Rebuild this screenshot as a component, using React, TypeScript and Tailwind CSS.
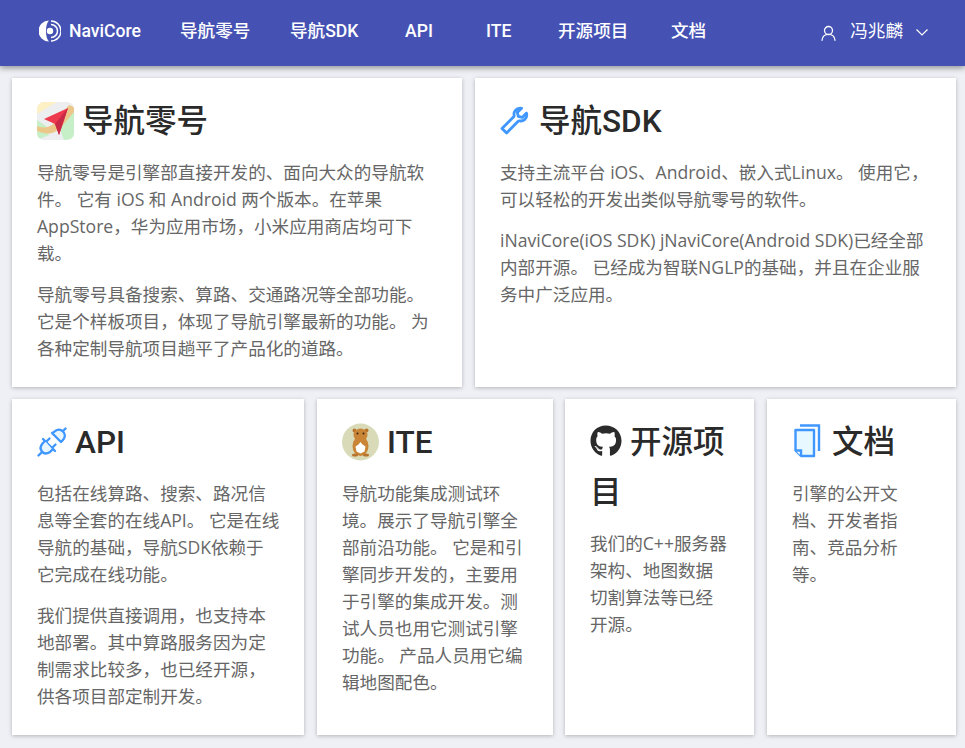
import React from 'react';
import { FaGithub } from 'react-icons/fa';

function ZeroIcon() {
  return (
    <svg width="37" height="38" viewBox="0 0 37 38" className="translate-y-[2px]">
      <defs>
        <clipPath id="zero"><rect width="37" height="38" rx="7" /></clipPath>
      </defs>
      <g clipPath="url(#zero)">
        <rect width="37" height="38" fill="#eceef0" />
        <path d="M0 0h20L0 12z" fill="#fdf0c4" />
        <path d="M0 18l9 6 3 9-12 5z" fill="#c6efc8" />
        <path d="M24 15l13-6v28l-10 1-3-8z" fill="#c6efc8" />
        <path d="M0 24c10 4 17-1 22-8L32 3l5 2v5L26 23c-7 9-15 10-23 7l-3-1z" fill="#ecc78a" />
        <path d="M31 6L7 17l11 5 4 11z" fill="#ee3a4f" />
        <path d="M31 6L18 22l4 11z" fill="#c92a45" />
      </g>
    </svg>
  );
}

function WrenchIcon() {
  return (
    <svg width="31" height="30" viewBox="0 0 31 30" fill="none" stroke="#3f97ff" strokeWidth="2.800" strokeLinejoin="round" className="-translate-y-[2px]">
      <path d="M20 2.200c-3.800 0-6.600 3.400-5.900 7.100.1.600 0 1.100-.4 1.500L2 22.400 6.600 27 18.200 15.300c.4-.4.9-.5 1.500-.4 3.700.7 7.100-2.100 7.100-5.900 0-.7-.1-1.300-.3-1.900l-4.300 4.300-3.900-1-1-3.900 4.300-4.200c-.6-.2-1-.1-1.600-.1z" />
    </svg>
  );
}

function PlugIcon() {
  return (
    <svg width="30" height="30" viewBox="0 0 30 30" fill="none" stroke="#3f97ff" strokeWidth="2.400" strokeLinecap="round" strokeLinejoin="round" className="-translate-y-[2px]">
      <path d="M1.500 28.500l4-4" />
      <path d="M23.500 6.500l5-5" />
      <path d="M15 6l9 9 1.500-1.500c3-3 3-6.500.5-9s-6-2.500-9 .5z" fill="#e8f6ff" />
      <path d="M12.500 11.500l-3 3M18.500 17.500l-3 3" />
      <path d="M6 12l12 12" />
      <path d="M8 14l-2.500 2.500c-2.500 3-2.500 5.500-.5 8s5 2.500 8 .5l2.500-2.500" fill="#e8f6ff" />
    </svg>
  );
}

function HamsterIcon() {
  return (
    <svg width="37" height="38" viewBox="0 0 37 38" className="translate-y-[2px]">
      <circle cx="18.500" cy="19" r="18.500" fill="#d9dbb8" />
      <circle cx="12.500" cy="7.500" r="2" fill="#b8742c" />
      <circle cx="24.500" cy="7.500" r="2" fill="#b8742c" />
      <ellipse cx="18.500" cy="12" rx="7" ry="6.500" fill="#c98436" />
      <ellipse cx="18.500" cy="23" rx="8" ry="10" fill="#c98436" />
      <circle cx="15.500" cy="10.500" r="1" fill="#3a2410" />
      <circle cx="21.500" cy="10.500" r="1" fill="#3a2410" />
      <path d="M18.500 19l2 2.500 3 2-1 5-4 2-4-2-1-5 3-2z" fill="#fff" />
      <ellipse cx="13" cy="32" rx="3" ry="1.500" fill="#b8742c" />
      <ellipse cx="24" cy="32" rx="3" ry="1.500" fill="#b8742c" />
    </svg>
  );
}

function DocIcon() {
  return (
    <svg width="32" height="34" viewBox="0 0 32 34" fill="none" stroke="#3f97ff" strokeWidth="2.400" className="-translate-y-[1px]">
      <path d="M8 1.500h19v25.500" />
      <path d="M3.500 6h18.500v26h-13l-5.500-5.500z" fill="#e8f8ff" strokeLinejoin="round" />
      <path d="M3.500 26.500h5.500v5.500" fill="#fff" />
    </svg>
  );
}

function NaviLogo() {
  return (
    <svg width="22" height="22" viewBox="0 0 22 22" fill="none" stroke="#fff">
      <path d="M10 .5a10.500 10.500 0 0 0 0 21c-2-2-3-5.500-3-10.500s1-8.500 3-10.500z" fill="#fff" stroke="none" />
      <path d="M12 1a10 10 0 0 1 0 20" strokeWidth="1.500" />
      <path d="M12 4.500a6.500 6.500 0 0 1 0 13" strokeWidth="1.500" />
      <circle cx="11" cy="11" r="3.200" fill="#fff" stroke="none" />
    </svg>
  );
}

function UserIcon() {
  return (
    <svg width="15" height="16" viewBox="0 0 15 16" fill="none" stroke="#fff" strokeWidth="1.300" strokeLinecap="round" className="mt-[4px]">
      <circle cx="7.500" cy="5.500" r="4" />
      <path d="M1 15.300c.3-3.500 2.500-6 6.500-6s6.200 2.500 6.500 6" />
    </svg>
  );
}

interface CardProps {
  icon: React.ReactNode;
  title: string;
  paras: string[];
  className: string;
}

function Card({ icon, title, paras, className }: CardProps) {
  return (
    <div className={`bg-white shadow-[0_1px_4px_rgba(0,0,0,0.25)] pl-[25px] pt-[19px] ${className}`}>
      <h2 className="text-[31.5px] leading-[50px] font-medium text-[#2a2a2a] mb-[12px]">
        <span className="inline-block align-[-6px] mr-[8px]">{icon}</span>
        {title}
      </h2>
      {paras.map((p, i) => (
        <p key={i} className="font-['Open_Sans','Noto_Sans_CJK_SC',sans-serif] whitespace-pre-line text-[17.6px] leading-[27px] text-[#666] mb-[14px]">{p}</p>
      ))}
    </div>
  );
}

const links = [
  { label: '导航零号', w: 'w-[110px]' },
  { label: '导航SDK', w: 'w-[115px]' },
  { label: 'API', w: 'w-[81px]' },
  { label: 'ITE', w: 'w-[72px]' },
  { label: '开源项目', w: 'w-[113px]' },
  { label: '文档', w: 'w-[70px]' },
];

export default function App() {
  return (
    <div className="font-['Roboto','Noto_Sans_CJK_SC',sans-serif] min-h-[748px] bg-[#eff0f5] overflow-hidden">
      <header className="h-[66px] pb-[4px] bg-[#4552b4] text-white shadow-[0_2px_6px_rgba(0,0,0,0.4)] flex items-center text-[17.6px] relative">
        <div className="ml-[39px] w-[141px] flex items-center gap-[8px] font-medium">
          <NaviLogo />
          NaviCore
        </div>
        <nav className="flex font-medium">
          {links.map(l => <span key={l.label} className={l.w}>{l.label}</span>)}
        </nav>
        <div className="ml-auto mr-[37px] flex items-center">
          <UserIcon />
          <span className="ml-[14px] mr-[13px]">冯兆麟</span>
          <svg width="12" height="7" viewBox="0 0 12 7" fill="none" stroke="#fff" strokeWidth="1.200" className="mt-[3px]">
            <path d="M.5.500L6 6l5.500-5.500" />
          </svg>
        </div>
      </header>
      <div className="flex gap-[13px] pl-[12px] mt-[12px]">
        <Card
          className="w-[450px] h-[309px] pr-[25px]"
          icon={<ZeroIcon />}
          title="导航零号"
          paras={[
            '导航零号是引擎部直接开发的、面向大众的导航软件。 它有 iOS 和 Android 两个版本。在苹果 AppStore，华为应用市场，小米应用商店均可下载。',
            '导航零号具备搜索、算路、交通路况等全部功能。 它是个样板项目，体现了导航引擎最新的功能。 为各种定制导航项目趟平了产品化的道路。',
          ]}
        />
        <Card
          className="w-[481px] h-[309px] pr-[25px]"
          icon={<WrenchIcon />}
          title="导航SDK"
          paras={[
            '支持主流平台 iOS、Android、嵌入式Linux。 使用它，可以轻松的开发出类似导航零号的软件。',
            'iNaviCore(iOS SDK) jNaviCore(Android SDK)已经全部内部开源。 已经成为智联NGLP的基础，并且在企业服务中广泛应用。',
          ]}
        />
      </div>
      <div className="flex pl-[12px] mt-[12px]">
        <Card
          className="w-[292px] h-[336px] mr-[13px] pr-[22px]"
          icon={<PlugIcon />}
          title="API"
          paras={[
            '包括在线算路、搜索、路况信息等全套的在线API。 它是在线导航的基础，导航SDK依赖于\n它完成在线功能。',
            '我们提供直接调用，也支持本地部署。其中算路服务因为定制需求比较多，也已经开源，供各项目部定制开发。',
          ]}
        />
        <Card
          className="w-[236px] h-[336px] mr-[12px] pr-[25px]"
          icon={<HamsterIcon />}
          title="ITE"
          paras={['导航功能集成测试环境。展示了导航引擎全部前沿功能。 它是和引擎同步开发的，主要用于引擎的集成开发。测试人员也用它测试引擎功能。 产品人员用它编辑地图配色。']}
        />
        <Card
          className="w-[189px] h-[336px] mr-[13px] pr-[25px]"
          icon={<FaGithub size={32} className="text-[#2b2b2b] -translate-y-[2px]" />}
          title="开源项目"
          paras={['我们的C++服务器架构、地图数据切割算法等已经开源。']}
        />
        <Card
          className="w-[189px] h-[336px] pr-[25px]"
          icon={<DocIcon />}
          title="文档"
          paras={['引擎的公开文档、开发者指南、竞品分析等。']}
        />
      </div>
    </div>
  );
}
